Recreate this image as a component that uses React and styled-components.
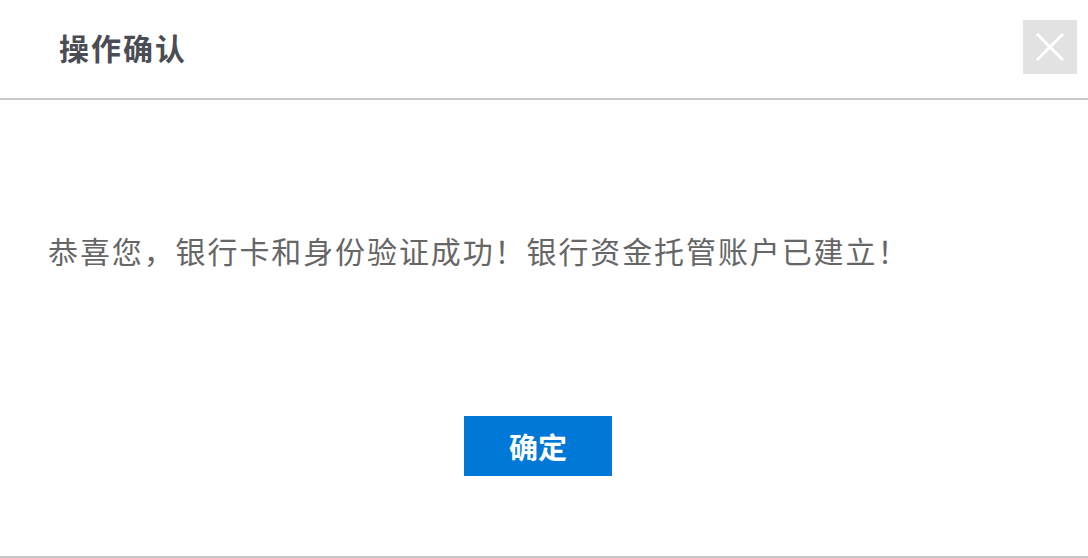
import React from 'react'
import styled, { createGlobalStyle } from 'styled-components'

const GlobalStyle = createGlobalStyle`
  html, body {
    margin: 0;
    padding: 0;
    background: #fff;
  }
  body {
    font-family: "Noto Sans CJK SC", "Noto Sans", sans-serif;
  }
`

const Dialog = styled.div`
  width: 1088px;
  height: 558px;
  display: flex;
  flex-direction: column;
  background: #fff;
  border-bottom: 2px solid #c8c8c8;
  box-sizing: border-box;
`

const Header = styled.div`
  height: 100px;
  box-sizing: border-box;
  display: flex;
  align-items: center;
  justify-content: space-between;
  padding: 0 11px 4px 59px;
  border-bottom: 2px solid #c8c8c8;
`

const Title = styled.h2`
  margin: 0;
  font-size: 30px;
  font-weight: 700;
  color: #4a4e54;
  letter-spacing: 2px;
`

const CloseButton = styled.button`
  width: 54px;
  height: 54px;
  padding: 0;
  border: none;
  background: #e2e2e2;
  display: flex;
  align-items: center;
  justify-content: center;
  cursor: pointer;
`

const Body = styled.div`
  flex: 1;
  display: flex;
  flex-direction: column;
  padding: 0 60px 0 48px;
`

const Message = styled.p`
  margin: 128px 0 0;
  font-size: 30px;
  line-height: 44px;
  color: #666;
  letter-spacing: 1.9px;
`

const Actions = styled.div`
  display: flex;
  justify-content: center;
  margin-top: 144px;
`

const PrimaryButton = styled.button`
  width: 148px;
  height: 60px;
  border: none;
  background: #0078d7;
  color: #fff;
  font-family: inherit;
  font-size: 29px;
  font-weight: 700;
  cursor: pointer;
`

const App = () => {
  return (
    <>
      <GlobalStyle />
      <Dialog>
        <Header>
          <Title>操作确认</Title>
          <CloseButton aria-label="关闭">
            <svg width="32" height="32" viewBox="0 0 32 32">
              <path d="M3 3 L29 29 M29 3 L3 29" stroke="#fff" strokeWidth="3" />
            </svg>
          </CloseButton>
        </Header>
        <Body>
          <Message>恭喜您，银行卡和身份验证成功！银行资金托管账户已建立！</Message>
          <Actions>
            <PrimaryButton>确定</PrimaryButton>
          </Actions>
        </Body>
      </Dialog>
    </>
  )
}

export default App
